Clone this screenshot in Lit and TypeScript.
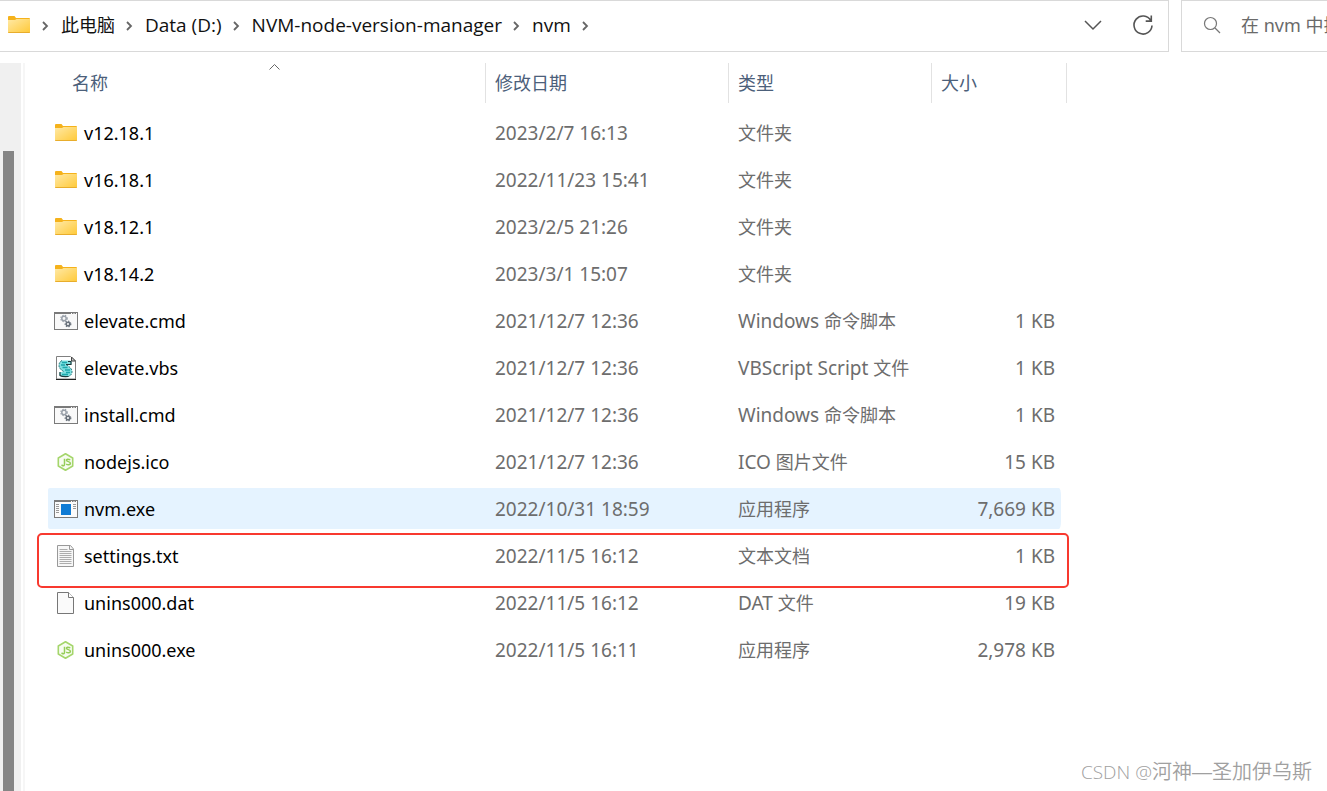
import { LitElement, html, css, svg } from "lit";
import { customElement, property, state } from "lit/decorators.js";
import { classMap } from "lit/directives/class-map.js";

type IconName = "folder" | "cmd" | "vbs" | "node" | "exe" | "txt" | "file";

interface Entry {
  name: string;
  icon: IconName;
  modified: string;
  kind: string;
  size: string;
  marked?: boolean;
}

const ENTRIES: Entry[] = [
  { name: "v12.18.1", icon: "folder", modified: "2023/2/7 16:13", kind: "文件夹", size: "" },
  { name: "v16.18.1", icon: "folder", modified: "2022/11/23 15:41", kind: "文件夹", size: "" },
  { name: "v18.12.1", icon: "folder", modified: "2023/2/5 21:26", kind: "文件夹", size: "" },
  { name: "v18.14.2", icon: "folder", modified: "2023/3/1 15:07", kind: "文件夹", size: "" },
  { name: "elevate.cmd", icon: "cmd", modified: "2021/12/7 12:36", kind: "Windows 命令脚本", size: "1 KB" },
  { name: "elevate.vbs", icon: "vbs", modified: "2021/12/7 12:36", kind: "VBScript Script 文件", size: "1 KB" },
  { name: "install.cmd", icon: "cmd", modified: "2021/12/7 12:36", kind: "Windows 命令脚本", size: "1 KB" },
  { name: "nodejs.ico", icon: "node", modified: "2021/12/7 12:36", kind: "ICO 图片文件", size: "15 KB" },
  { name: "nvm.exe", icon: "exe", modified: "2022/10/31 18:59", kind: "应用程序", size: "7,669 KB" },
  { name: "settings.txt", icon: "txt", modified: "2022/11/5 16:12", kind: "文本文档", size: "1 KB", marked: true },
  { name: "unins000.dat", icon: "file", modified: "2022/11/5 16:12", kind: "DAT 文件", size: "19 KB" },
  { name: "unins000.exe", icon: "node", modified: "2022/11/5 16:11", kind: "应用程序", size: "2,978 KB" },
];

// Chinese runs are set one pixel smaller than the Latin text beside them.
const mixed = (text: string) =>
  text.split(/([\u4e00-\u9fff]+)/).map((run, i) => (i % 2 ? html`<span class="cjk">${run}</span>` : run));

const gear = (cx: number, cy: number, r: number, color: string) => svg`
  <circle cx=${cx} cy=${cy} r=${r} fill="none" stroke=${color} stroke-width="1.5"></circle>
  <circle cx=${cx} cy=${cy} r=${r + 1} fill="none" stroke=${color} stroke-width="1.2" stroke-dasharray="1.3 1.3"></circle>`;

const ICONS = {
  folder: svg`
    <defs><linearGradient id="g" x1="0" y1="0" x2="1" y2="1">
      <stop offset="0" stop-color="#ffe9a6"></stop><stop offset="1" stop-color="#ffc937"></stop>
    </linearGradient></defs>
    <path d="M1 4q0-1 1-1h5.500l1.500 2H22q1 0 1 1v3H1z" fill="#f5b21b"></path>
    <path d="M1 7h7l1.500-1H23v13q0 1-1 1H2q-1 0-1-1z" fill="url(#g)"></path>
    <path d="M1 19h22q0 1-1 1H2q-1 0-1-1z" fill="#e8ad2c"></path>`,
  cmd: svg`
    <rect x="0.500" y="3.500" width="23" height="17" fill="#f9f9f9" stroke="#7a7a7a"></rect>
    <path d="M0 4h24" stroke="#7a7a7a" stroke-width="2"></path>
    <path d="M17 4.500h1M19.500 4.500h1M22 4.500h1" stroke="#fff"></path>
    ${gear(10, 9.5, 2.2, "#9aa1aa")}${gear(14, 15, 1.8, "#68707a")}`,
  vbs: svg`
    <path d="M2.500 .500h14l5 4.500v18h-19z" fill="#fff" stroke="#808080"></path>
    <path d="M2 23.500h20" stroke="#222"></path>
    <path d="M17.500 1v4h4z" fill="#ccc" stroke="#444"></path>
    <path d="M8 4.500h8q2.500 1.500 1 4h-5q6 3.500 6 7t-3.500 5H7q-3-1.500-1-4.500h4q-5-3-5-6.500t3-5z" fill="#7fdfe0"></path>
    <path d="M8 4.500q-3 1.500-3 5t5.500 6.500M12 8.500q6 3.500 6 7t-3.500 5" fill="none" stroke="#1f6f74" stroke-dasharray="2 1"></path>
    <path d="M8 6.500h5M7 9h4M8.500 11.500h5M11 14h5M12 16.500h4M8 18.500h6" stroke="#1ba7ab" stroke-width="1.300"></path>
    <path d="M14 5.500h3v3h-5M6 16v3.500q2 1.500 8.500 1" fill="none" stroke="#1b3a3d" stroke-width="1.200"></path>`,
  node: svg`
    <path d="M11.500 3.800l7.200 4.200v8L11.500 20.200 4.300 16V8z" fill="#f7fcf1" stroke="#a5d66c" stroke-width="1.600" stroke-linejoin="round"></path>
    <path d="M10.500 8.800v5.200q0 2-1.700 1.700L7.500 15M16.300 9.700q-3.600-1.200-3.800.5c0 1.900 3.900.9 3.900 3 0 2.200-3 1.800-4.200 1" fill="none" stroke="#95cd58" stroke-width="1.500"></path>`,
  exe: svg`
    <rect x="0.500" y="3.500" width="23" height="17" fill="#fafafa" stroke="#7a7a7a"></rect>
    <path d="M0 4h24" stroke="#7a7a7a" stroke-width="2"></path>
    <path d="M17 4.500h1M19.500 4.500h1M22 4.500h1" stroke="#fff"></path>
    <rect x="7" y="7" width="10" height="11" fill="#0f7bd4"></rect>
    <path d="M2 7.500h3M2 9.500h3M2 11.500h3M2 13.500h3M2 15.500h3M19 7.500h3M19 9.500h3M19 11.500h3" stroke="#999"></path>`,
  txt: svg`
    <path d="M3.500 1.500h13l3 3.500v17.500h-16z" fill="#f7f7f7" stroke="#999"></path>
    <path d="M15.500 1.500v4h4" fill="none" stroke="#999"></path>
    <path d="M5.500 5.500h8M5.500 7.500h12M5.500 9.500h12M5.500 11.500h12M5.500 13.500h12M5.500 15.500h12M5.500 17.500h12M5.500 19.500h12" stroke="#adadad"></path>`,
  file: svg`
    <path d="M3.500 1.500h11l5 5v16h-16z" fill="#fafafa" stroke="#777"></path>
    <path d="M14.500 1.500v5h5" fill="#fff" stroke="#777"></path>`,
};

@customElement("file-icon")
export class FileIcon extends LitElement {
  @property() name: IconName = "file";
  static styles = css`
    :host { display: block; flex: none; width: 24px; height: 24px; }
    .glyph { display: block; width: 24px; height: 24px; }
  `;
  render() {
    return html`<svg class="glyph" viewBox="0 0 24 24" aria-hidden="true">${ICONS[this.name]}</svg>`;
  }
}

@customElement("address-bar")
export class AddressBar extends LitElement {
  static styles = css`
    :host { display: flex; gap: 12px; height: 52px; }
    button, input {
      font: inherit; color: inherit; background: none; border: 0; padding: 0; margin: 0; outline: none;
    }
    .path {
      flex: 1; display: flex; align-items: center; box-sizing: border-box; min-width: 0;
      border: 1px solid #d9d9d9; border-left: 0; padding: 0 12px 2px 7px; color: #111;
    }
    .crumbs {
      display: flex; align-items: center; flex: 1; min-width: 0; white-space: nowrap;
      font-family: "Open Sans", "Noto Sans CJK SC", sans-serif;
    }
    .chevron { width: 8px; height: 12px; margin: 2px 12px 0 10px; flex: none; }
    .cjk { font-size: 18px; }
    .tool { display: grid; place-items: center; width: 26px; height: 26px; margin-left: 24px; }
    .search {
      box-sizing: border-box; flex: 0 1 146px; min-width: 0; display: flex; align-items: center; gap: 20px;
      border: 1px solid #d9d9d9; border-right: 0; padding: 0 0 2px 21px; color: #666;
    }
    .search svg { flex: none; }
    .field { flex: 1; min-width: 0; width: 0; font-size: 18px; }
    .field::placeholder { color: #6a6a6a; opacity: 1; }
  `;
  private chevron() {
    return html`<svg class="chevron" viewBox="0 0 8 12" fill="none" stroke="#666" stroke-width="1.800" aria-hidden="true">
      <path d="M2 2l4 4-4 4"></path></svg>`;
  }
  render() {
    const crumbs = ["此电脑", "Data (D:)", "NVM-node-version-manager", "nvm"];
    return html`
      <div class="path">
        <file-icon name="folder"></file-icon>
        <nav class="crumbs" aria-label="路径">
          ${this.chevron()}
          ${crumbs.map((c) => html`<button>${mixed(c)}</button>${this.chevron()}`)}
        </nav>
        <button class="tool" aria-label="历史记录">
          <svg width="18" height="18" viewBox="0 0 18 18" fill="none" stroke="#555" stroke-width="1.500"><path d="M1 5l8 8 8-8"></path></svg>
        </button>
        <button class="tool" aria-label="刷新">
          <svg width="22" height="22" viewBox="0 0 22 22" fill="none" stroke="#555" stroke-width="1.600">
            <path d="M18.800 6.500A9 9 0 1 0 20 11.500M19.300 1.500v5.600h-5.600"></path></svg>
        </button>
      </div>
      <label class="search">
        <svg width="18" height="18" viewBox="0 0 18 18" fill="none" stroke="#777" stroke-width="1.200">
          <circle cx="7.500" cy="7.500" r="6"></circle><path d="M12 12l5 5"></path></svg>
        <input class="field" type="text" aria-label="搜索" placeholder="在 nvm 中搜索" />
      </label>`;
  }
}

@customElement("file-table")
export class FileTable extends LitElement {
  @state() private active = "nvm.exe";
  static styles = css`
    :host { display: block; }
    table { table-layout: fixed; width: 1019px; border-collapse: separate; border-spacing: 0 6px; }
    .c-name { width: 438px; }
    .c-date { width: 243px; }
    .c-kind { width: 203px; }
    .c-size { width: 135px; }
    th { height: 43px; padding: 0; vertical-align: top; text-align: left; font-weight: inherit; }
    .sort {
      display: block; position: relative; box-sizing: border-box; width: 100%; height: 40px;
      font: inherit; font-size: 18px; color: #4c607a; text-align: left; background: none;
      border: 0; border-right: 1px solid #e2e2e2; padding: 0 0 0 9px; margin: 0;
    }
    .first { padding-left: 24px; }
    .caret { position: absolute; left: 220px; top: 0; }
    td { height: 41px; padding: 0 0 0 9px; color: #6d6d6d; white-space: nowrap; }
    .cjk { font-size: 18px; }
    .name { padding-left: 6px; color: #000; font-size: 18px; }
    .size { padding: 0 6px 0 0; text-align: right; border-right: 6px solid transparent; background-clip: padding-box; }
    .entry { display: flex; align-items: center; gap: 6px; }
    .active td { background-color: #e5f3ff; }
    .active .name { border-radius: 2px 0 0 2px; }
    .active .size { border-radius: 0 8px 8px 0; }
    .marked { position: relative; }
    .frame {
      position: absolute; inset: -2px -2px -12px -11px; border: 2px solid #f8392f; border-radius: 5px; pointer-events: none;
    }
  `;
  render() {
    return html`
      <table>
        <colgroup><col class="c-name" /><col class="c-date" /><col class="c-kind" /><col class="c-size" /></colgroup>
        <thead><tr>
          <th scope="col"><button class="sort first">名称
            <svg class="caret" width="14" height="8" viewBox="0 0 14 8" fill="none" stroke="#666"><path d="M1.500 6.500l5-5 5 5"></path></svg>
          </button></th>
          <th scope="col"><button class="sort">修改日期</button></th>
          <th scope="col"><button class="sort">类型</button></th>
          <th scope="col"><button class="sort">大小</button></th>
        </tr></thead>
        <tbody>
          ${ENTRIES.map((e) => html`
            <tr class=${classMap({ active: e.name === this.active, marked: !!e.marked })} @click=${() => (this.active = e.name)}>
              <td class="name"><div class="entry"><file-icon name=${e.icon}></file-icon>${e.name}</div>
                ${e.marked ? html`<span class="frame"></span>` : ""}</td>
              <td>${e.modified}</td>
              <td>${mixed(e.kind)}</td>
              <td class="size">${e.size}</td>
            </tr>`)}
        </tbody>
      </table>`;
  }
}

@customElement("app-root")
export class AppRoot extends LitElement {
  static styles = css`
    :host {
      display: flex; flex-direction: column; position: relative; min-height: 100vh; overflow: hidden;
      background: #fff; font: 19px/26px "Noto Sans", "Noto Sans CJK SC", sans-serif;
    }
    .body { flex: 1; display: flex; margin-top: 11px; }
    .rail { box-sizing: border-box; width: 21px; background: #f0f0f0; padding: 88px 7px 0 3px; display: flex; }
    .thumb { flex: 1; background: #858585; }
    .divider { width: 2px; margin-left: 2px; background: #f6f6f6; }
    .list { margin: -6px 0 0 23px; }
    .credit {
      position: absolute; right: 15px; bottom: 6px; font-size: 20px; color: #a0a0a0;
      font-family: "Liberation Sans", "Noto Sans CJK SC", sans-serif; font-weight: 350;
    }
    .latin { font-family: "Open Sans", sans-serif; font-size: 19px; }
  `;
  render() {
    return html`
      <address-bar></address-bar>
      <main class="body">
        <div class="rail"><div class="thumb"></div></div>
        <div class="divider"></div>
        <file-table class="list"></file-table>
      </main>
      <div class="credit"><span class="latin">CSDN @</span>河神—圣加伊乌斯</div>`;
  }
}
